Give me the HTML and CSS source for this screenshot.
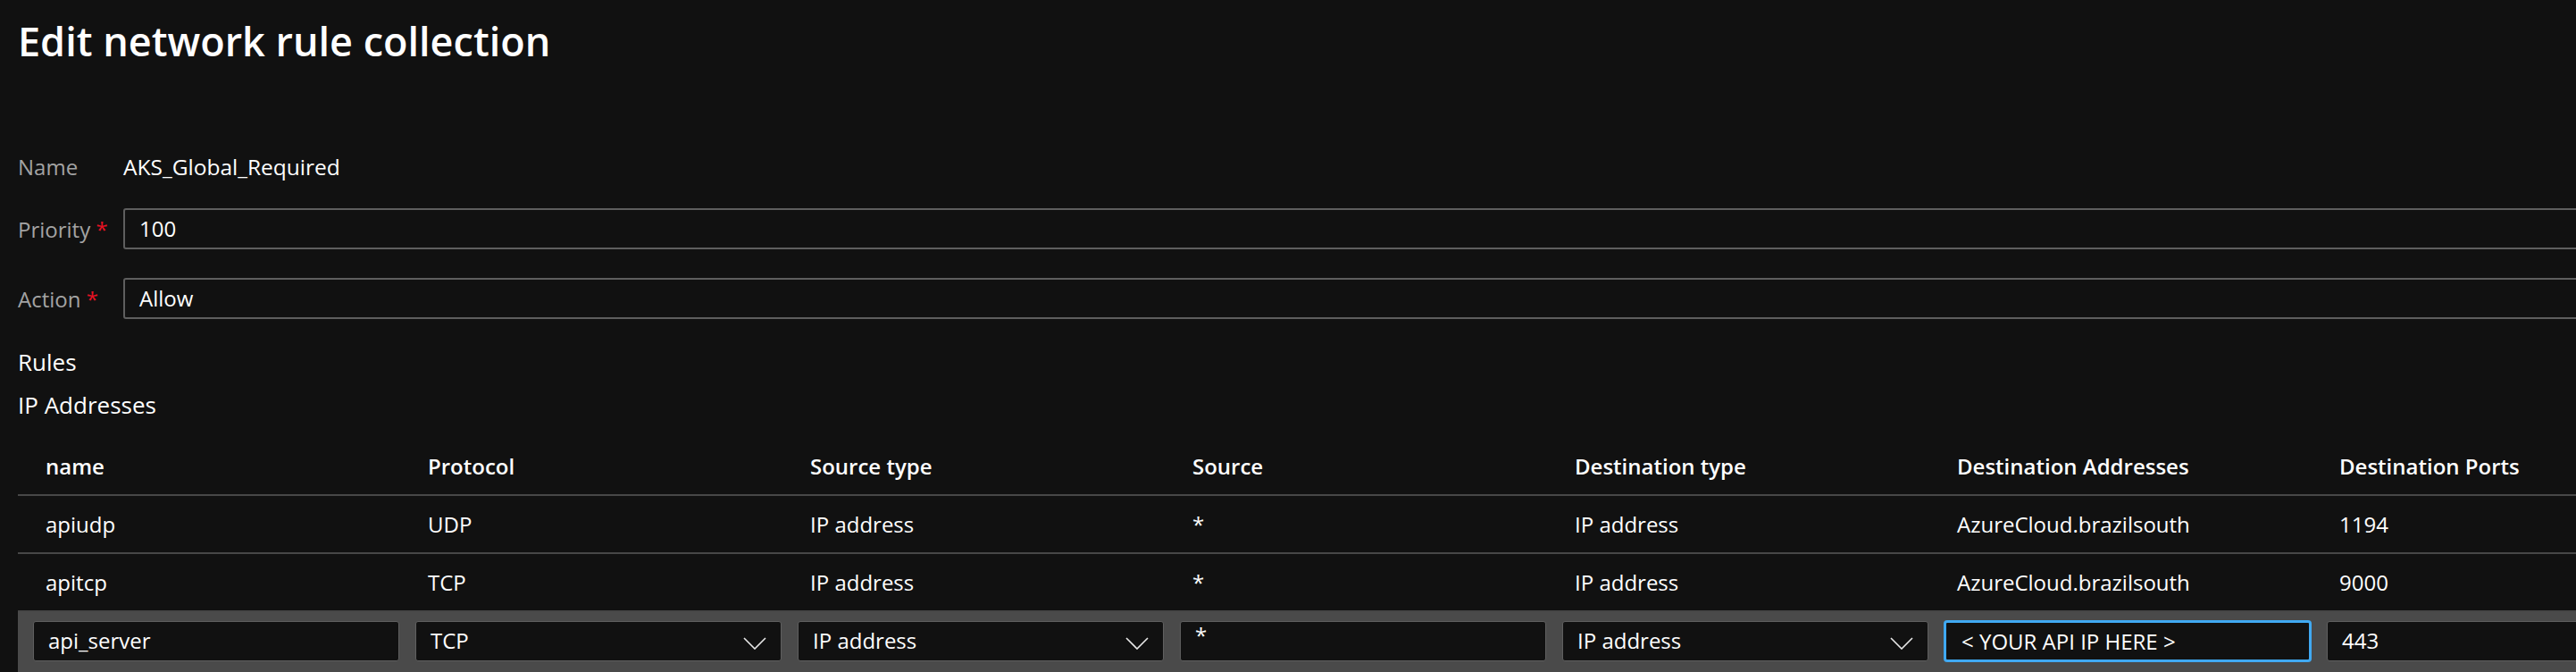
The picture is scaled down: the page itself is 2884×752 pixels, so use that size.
FILE: index.html
```html
<!DOCTYPE html>
<html lang="en">
<head>
    <meta charset="UTF-8">
    <meta name="viewport" content="width=device-width, initial-scale=1.0">
    <title>Edit network rule collection</title>
    <link rel="stylesheet" href="styles.css">
</head>
<body>

<div class="blade">
    <h1 class="blade-title">Edit network rule collection</h1>

    <div class="form">
        <div class="field field-static">
            <span class="field-label">Name</span>
            <span class="field-value">AKS_Global_Required</span>
        </div>
        <div class="field">
            <span class="field-label">Priority <span class="required">*</span></span>
            <div class="text-box">100</div>
        </div>
        <div class="field">
            <span class="field-label">Action <span class="required">*</span></span>
            <div class="text-box">Allow</div>
        </div>
    </div>

    <div class="section-title section-rules">Rules</div>
    <div class="section-title section-ip">IP Addresses</div>

    <div class="rule-grid">
        <div class="grid-row grid-head">
            <div class="cell">name</div>
            <div class="cell">Protocol</div>
            <div class="cell">Source type</div>
            <div class="cell">Source</div>
            <div class="cell">Destination type</div>
            <div class="cell">Destination Addresses</div>
            <div class="cell">Destination Ports</div>
        </div>
        <div class="grid-row">
            <div class="cell">apiudp</div>
            <div class="cell">UDP</div>
            <div class="cell">IP address</div>
            <div class="cell">*</div>
            <div class="cell">IP address</div>
            <div class="cell">AzureCloud.brazilsouth</div>
            <div class="cell">1194</div>
        </div>
        <div class="grid-row">
            <div class="cell">apitcp</div>
            <div class="cell">TCP</div>
            <div class="cell">IP address</div>
            <div class="cell">*</div>
            <div class="cell">IP address</div>
            <div class="cell">AzureCloud.brazilsouth</div>
            <div class="cell">9000</div>
        </div>

        <!-- row being edited -->
        <div class="grid-row edit-row">
            <div class="cell-input">api_server</div>
            <div class="cell-input dropdown">TCP
                <svg class="chevron" width="26" height="14" viewBox="0 0 26 14"><path d="M1 1 L13 13 L25 1" fill="none" stroke="#e8e8e8" stroke-width="1.6"/></svg>
            </div>
            <div class="cell-input dropdown">IP address
                <svg class="chevron" width="26" height="14" viewBox="0 0 26 14"><path d="M1 1 L13 13 L25 1" fill="none" stroke="#e8e8e8" stroke-width="1.6"/></svg>
            </div>
            <div class="cell-input"><span class="star">*</span></div>
            <div class="cell-input dropdown">IP address
                <svg class="chevron" width="26" height="14" viewBox="0 0 26 14"><path d="M1 1 L13 13 L25 1" fill="none" stroke="#e8e8e8" stroke-width="1.6"/></svg>
            </div>
            <div class="cell-input is-focused">&lt; YOUR API IP HERE &gt;</div>
            <div class="cell-input">443</div>
        </div>
    </div>
</div>

</body>
</html>
```

FILE: styles.css
```css
/* General styling */
html, body {
    overflow: hidden;
}

body {
    margin: 0;
    background-color: #111111;
    color: #ffffff;
    font-family: "Open Sans", "Noto Sans", sans-serif;
    font-size: 24px;
}

.blade {
    width: 3000px;
    padding: 16px 0 0 20px;
}

.blade-title {
    margin: 0;
    font-size: 45px;
    font-weight: 600;
    line-height: 60px;
}

/* Top form */
.form {
    margin-top: 94px;
    display: flex;
    flex-direction: column;
    gap: 30px;
}

.field {
    display: flex;
    align-items: center;
}

.field-static {
    height: 33px;
}

.field-label {
    width: 118px;
    flex: none;
    color: #a3a3a3;
}

.field-value {
    font-size: 24.5px;
}

.required {
    color: #e81123;
}

.text-box {
    flex: 1;
    height: 46px;
    box-sizing: border-box;
    border: 2px solid #5e5e5e;
    border-radius: 3px;
    padding: 0 16px;
    line-height: 42px;
}

.field + .field + .field {
    margin-top: 2px;
}

/* Section titles */
.section-title {
    font-size: 26px;
    line-height: 35px;
}

.section-rules {
    margin-top: 31px;
}

.section-ip {
    margin-top: 13px;
}

/* Rules grid */
.rule-grid {
    margin-top: 19px;
}

.grid-row {
    display: grid;
    grid-template-columns: repeat(7, 410px);
    column-gap: 18px;
    align-items: center;
    height: 65px;
    box-sizing: border-box;
    padding-left: 17px;
    border-bottom: 2px solid #474747;
}

.grid-head {
    font-weight: 600;
}

.cell {
    padding-left: 14px;
    white-space: nowrap;
}

.edit-row {
    height: 80px;
    align-items: start;
    padding-top: 10px;
    background-color: #4a4a4a;
    border-bottom: none;
}

.cell-input {
    position: relative;
    height: 45px;
    box-sizing: border-box;
    border: 1px solid #5f5f5f;
    border-radius: 3px;
    background-color: #111111;
    padding-left: 16px;
    line-height: 42px;
    white-space: nowrap;
}

.star {
    position: relative;
    top: -6px;
}

.dropdown .chevron {
    position: absolute;
    right: 16px;
    top: 17px;
}

.is-focused {
    border: 2px solid #40a9f2;
    box-shadow: 0 0 0 1px #40a9f2;
    padding-left: 17px;
}
```
